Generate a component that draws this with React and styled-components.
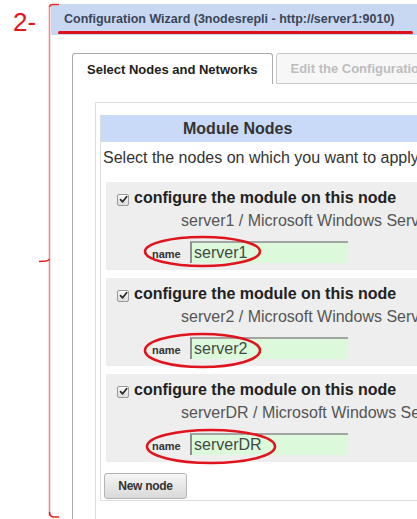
import React from 'react'
import styled, { createGlobalStyle } from 'styled-components'

const GlobalStyle = createGlobalStyle`
  html, body {
    margin: 0;
    padding: 0;
    background: #ffffff;
    overflow: hidden;
  }
  body {
    font-family: 'Liberation Sans', Arial, sans-serif;
  }
`

const nodes = [
  { id: 'n1', name: 'server1', ring: { left: -9, top: -6, width: 119, height: 33 } },
  { id: 'n2', name: 'server2', ring: { left: -9, top: -5, width: 119, height: 37 } },
  { id: 'n3', name: 'serverDR', ring: { left: -7, top: -5, width: 132, height: 37 } },
]

function CheckMark() {
  return (
    <CheckBox>
      <svg width="9" height="9" viewBox="0 0 9 9">
        <path d="M1.5 4.6 L3.6 6.8 L7.6 1.8" fill="none" stroke="#2b2b2b" strokeWidth="1.8" strokeLinecap="round" strokeLinejoin="round" />
      </svg>
    </CheckBox>
  )
}

function Ring({ box }) {
  return (
    <RingSvg
      style={{ left: box.left, top: box.top }}
      width={box.width}
      height={box.height}
      viewBox={`0 0 ${box.width} ${box.height}`}
    >
      <ellipse
        cx={box.width / 2}
        cy={box.height / 2}
        rx={box.width / 2 - 2}
        ry={box.height / 2 - 2}
        fill="none"
        stroke="#e0141c"
        strokeWidth="2.6"
      />
    </RingSvg>
  )
}

function Bracket() {
  return (
    <BracketSvg width="70" height="519" viewBox="0 0 70 519">
      <path d="M49.5 6 V516" stroke="#f08a8a" strokeWidth="1.6" fill="none" />
      <path d="M49.5 7 Q49.5 4.5 53 4.5 L59 4.5" stroke="#e63030" strokeWidth="1.4" fill="none" />
      <path d="M39 261.5 L46 261 Q49 260.5 49.5 259" stroke="#e62020" strokeWidth="1.4" fill="none" />
      <path d="M49.5 512 Q49.5 517 54 517 L59 517" stroke="#e62020" strokeWidth="1.5" fill="none" />
    </BracketSvg>
  )
}

export default function App() {
  return (
    <Page>
      <GlobalStyle />
      <Gutter>
        <StepLabel>2-</StepLabel>
      </Gutter>
      <Dialog>
        <TitleBar>
          <Title>Configuration Wizard (3nodesrepli - http://server1:9010)</Title>
          <Underline />
        </TitleBar>
        <Body>
          <TabList>
            <Tab active>Select Nodes and Networks</Tab>
            <Tab>Edit the Configuration</Tab>
          </TabList>
          <TabPanel>
            <Frame>
              <ModuleBox>
                <ModuleHeader>Module Nodes</ModuleHeader>
                <Intro>Select the nodes on which you want to apply the module</Intro>
                <NodeList>
                  {nodes.map(node => (
                    <NodeCard key={node.id}>
                      <CheckRow>
                        <CheckMark />
                        <CheckText>configure the module on this node</CheckText>
                      </CheckRow>
                      <HostLine>{node.name} / Microsoft Windows Server 2012 R2 Standard</HostLine>
                      <NameRow>
                        <NameLabel>name</NameLabel>
                        <NameInput defaultValue={node.name} />
                        <Ring box={node.ring} />
                      </NameRow>
                    </NodeCard>
                  ))}
                </NodeList>
                <NewNodeButton>New node</NewNodeButton>
              </ModuleBox>
            </Frame>
          </TabPanel>
        </Body>
      </Dialog>
      <Bracket />
    </Page>
  )
}

const Page = styled.div`
  position: relative;
  width: 417px;
  height: 519px;
  overflow: hidden;
  display: flex;
  flex-flow: row nowrap;
  align-items: flex-start;
`

const Gutter = styled.div`
  width: 51px;
  min-width: 51px;
`

const StepLabel = styled.div`
  margin: 8px 0 0 13px;
  font-family: 'Liberation Sans', Arial, sans-serif;
  font-size: 26px;
  line-height: 28px;
  color: #e3141c;
`

const Dialog = styled.div`
  width: 620px;
  min-width: 620px;
  padding-top: 4px;
`

const TitleBar = styled.div`
  position: relative;
  height: 31px;
  background: #c9d8f2;
  display: flex;
  align-items: center;
  padding-left: 13px;
`

const Title = styled.span`
  font-size: 12.5px;
  font-weight: bold;
  color: #3a4658;
  margin-top: -1px;
  white-space: nowrap;
`

const Underline = styled.div`
  position: absolute;
  left: 7px;
  bottom: 1px;
  width: 355px;
  height: 3px;
  background: #e0101a;
  border-radius: 2px;
`

const Body = styled.div`
  padding: 18px 0 0 21px;
`

const TabList = styled.div`
  display: flex;
  flex-flow: row nowrap;
  gap: 3px;
  height: 31px;
`

const Tab = styled.div`
  display: flex;
  align-items: center;
  padding: 0 14px;
  white-space: nowrap;
  font-size: 13px;
  font-weight: bold;
  color: ${p => (p.active ? '#222222' : '#bdbdbd')};
  background: ${p => (p.active ? '#ffffff' : '#f7f7f7')};
  border: 1px solid ${p => (p.active ? '#aaaaaa' : '#c8c8c8')};
  border-bottom: ${p => (p.active ? 'none' : '1px solid #c8c8c8')};
  border-radius: 3px 3px 0 0;
`

const TabPanel = styled.div`
  border-left: 1px solid #aaaaaa;
  padding: 18px 0 0 22px;
`

const Frame = styled.div`
  border: 1px solid #dddddd;
  padding: 12px 0 40px 4px;
`

const ModuleBox = styled.div`
  border-left: 1px solid #dddddd;
  border-bottom: 1px solid #dddddd;
  padding-bottom: 1px;
`

const ModuleHeader = styled.div`
  height: 27px;
  line-height: 27px;
  background: #c9daf8;
  padding-left: 82px;
  font-size: 16px;
  font-weight: bold;
  color: #333333;
`

const Intro = styled.div`
  margin: 6px 0 0 2px;
  font-size: 16px;
  line-height: 20px;
  color: #333333;
  white-space: nowrap;
`

const NodeList = styled.div`
  display: flex;
  flex-direction: column;
  gap: 8px;
  margin: 14px 0 0 5px;
`

const NodeCard = styled.div`
  background: #eeeeee;
  padding: 7px 0 7px 11px;
`

const CheckRow = styled.div`
  display: flex;
  align-items: center;
  height: 20px;
`

const CheckBox = styled.span`
  display: inline-flex;
  align-items: center;
  justify-content: center;
  width: 10px;
  height: 10px;
  border: 1px solid #9a9a9a;
  border-radius: 2px;
  background: linear-gradient(#fafafa, #dcdcdc);
  margin: 1px 5px 0 0;
`

const CheckText = styled.span`
  font-size: 16px;
  font-weight: bold;
  color: #222222;
  margin-top: -2px;
  white-space: nowrap;
`

const HostLine = styled.div`
  margin: 2px 0 0 64px;
  font-size: 16px;
  line-height: 20px;
  color: #555555;
  white-space: nowrap;
`

const NameRow = styled.div`
  position: relative;
  display: flex;
  align-items: center;
  margin: 10px 0 0 35px;
  height: 22px;
`

const NameLabel = styled.span`
  font-size: 11px;
  font-weight: bold;
  color: #333333;
  width: 38px;
  margin-top: 3px;
`

const NameInput = styled.input`
  box-sizing: border-box;
  width: 158px;
  height: 22px;
  padding: 0 0 0 2px;
  font-family: 'Liberation Sans', Arial, sans-serif;
  font-size: 16px;
  color: #3f4a44;
  background: #dcf9dc;
  border: none;
  border-top: 2px solid #a3a3a3;
  border-left: 2px solid #8e8e8e;
  outline: none;
`

const RingSvg = styled.svg`
  position: absolute;
  pointer-events: none;
`

const NewNodeButton = styled.button`
  display: block;
  margin: 11px 0 0 3px;
  width: 83px;
  height: 26px;
  font-family: 'Liberation Sans', Arial, sans-serif;
  font-size: 12px;
  font-weight: bold;
  letter-spacing: -0.3px;
  color: #333333;
  background: linear-gradient(#f6f6f6, #d9d9d9);
  border: 1px solid #b5b5b5;
  border-radius: 3px;
`

const BracketSvg = styled.svg`
  position: absolute;
  left: 0;
  top: 0;
  pointer-events: none;
`
